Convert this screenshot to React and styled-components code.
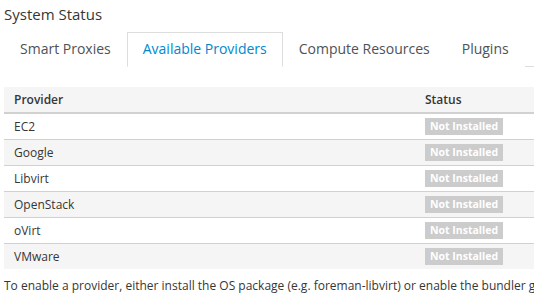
import React from 'react';
import styled, { createGlobalStyle } from 'styled-components';

const GlobalStyle = createGlobalStyle`
  body {
    margin: 0;
    background: #fff;
    font-family: 'Open Sans', 'Liberation Sans', sans-serif;
    color: #363636;
    overflow: hidden;
  }
`;

const providers = ['EC2', 'Google', 'Libvirt', 'OpenStack', 'oVirt', 'VMware'];
const tabs = ['Smart Proxies', 'Available Providers', 'Compute Resources', 'Plugins'];

export default function App() {
  return (
    <Page>
      <GlobalStyle />
      <Title>System Status</Title>
      <TabBar>
        {tabs.map((t) => (
          <Tab key={t} active={t === 'Available Providers'}>
            {t}
          </Tab>
        ))}
      </TabBar>
      <Table>
        <thead>
          <tr>
            <HeadCell>Provider</HeadCell>
            <HeadCell>Status</HeadCell>
          </tr>
        </thead>
        <tbody>
          {providers.map((p, i) => (
            <Row key={p} striped={i % 2 === 1}>
              <Cell>{p}</Cell>
              <Cell>
                <Badge>Not Installed</Badge>
              </Cell>
            </Row>
          ))}
        </tbody>
      </Table>
      <Note>
        To enable a provider, either install the OS package (e.g. foreman-libvirt) or enable the bundler group for development setup (e.g. ovirt).
      </Note>
    </Page>
  );
}

const Page = styled.div`
  padding: 4px 0 0 4px;
  width: 530px;
  overflow: hidden;
`;

const Title = styled.h1`
  margin: 0;
  font-size: 15px;
  font-weight: 400;
  line-height: 20px;
  color: #363636;
`;

const TabBar = styled.ul`
  display: flex;
  list-style: none;
  margin: 8px 0 20px;
  padding: 0;
  width: 531px;
  border-bottom: 1px solid #ddd;
`;

const Tab = styled.li`
  padding: 6px 15px 7px;
  margin-bottom: -1px;
  font-size: 14px;
  line-height: 20px;
  color: ${(p) => (p.active ? '#0088ce' : '#4d5258')};
  background: #fff;
  border: 1px solid ${(p) => (p.active ? '#ddd' : 'transparent')};
  border-bottom-color: ${(p) => (p.active ? '#fff' : 'transparent')};
`;

const Table = styled.table`
  border-collapse: collapse;
  width: 600px;
  font-size: 12px;
  line-height: 17px;

  th:first-child,
  td:first-child {
    width: 411px;
  }
`;

const HeadCell = styled.th`
  text-align: left;
  font-weight: 600;
  height: 26px;
  padding: 0 10px;
  background: #f5f5f5;
  border-bottom: 2px solid #d1d1d1;
  box-sizing: border-box;
`;

const Row = styled.tr`
  background: ${(p) => (p.striped ? '#f5f5f5' : '#fff')};
  border-bottom: 1px solid #d1d1d1;

  &:last-child {
    border-bottom: none;
  }
`;

const Cell = styled.td`
  height: 26px;
  padding: 0 10px;
  vertical-align: middle;
  box-sizing: border-box;
`;

const Badge = styled.span`
  display: inline-block;
  padding: 0 5px;
  height: 17px;
  line-height: 17px;
  background: #cccccc;
  color: #fff;
  font-size: 10.5px;
  font-weight: 700;
  vertical-align: middle;
`;

const Note = styled.p`
  margin: 7px 0 0;
  font-size: 12px;
  line-height: 20px;
  white-space: nowrap;
`;
